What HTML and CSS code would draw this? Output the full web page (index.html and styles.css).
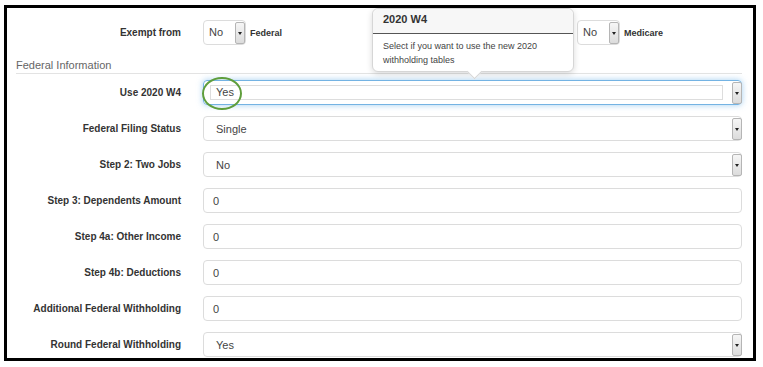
FILE: index.html
```html
<!DOCTYPE html>
<html lang="en">
<head>
  <meta charset="UTF-8" />
  <title>Employee Tax Settings</title>
  <link rel="stylesheet" href="styles.css">
</head>
<body>

<div class="frame">
  <div class="row">
    <div class="label">Exempt from</div>
    <div class="field-inline">
      <div class="mini-select">No<span class="drop"></span></div>
      <span class="inline-label">Federal</span>
    </div>
    <div class="field-inline medicare">
      <div class="mini-select">No<span class="drop"></span></div>
      <span class="inline-label">Medicare</span>
    </div>
  </div>

  <div class="legend">Federal Information</div>

  <div class="row">
    <div class="label">Use 2020 W4</div>
    <div class="control select focus">
      <div class="inner-box">Yes</div>
      <span class="drop"></span>
      <span class="circle"></span>
    </div>
  </div>
  <div class="row">
    <div class="label">Federal Filing Status</div>
    <div class="control select">Single<span class="drop"></span></div>
  </div>
  <div class="row">
    <div class="label">Step 2: Two Jobs</div>
    <div class="control select">No<span class="drop"></span></div>
  </div>
  <div class="row">
    <div class="label">Step 3: Dependents Amount</div>
    <div class="control">0</div>
  </div>
  <div class="row">
    <div class="label">Step 4a: Other Income</div>
    <div class="control">0</div>
  </div>
  <div class="row">
    <div class="label">Step 4b: Deductions</div>
    <div class="control">0</div>
  </div>
  <div class="row">
    <div class="label">Additional Federal Withholding</div>
    <div class="control">0</div>
  </div>
  <div class="row">
    <div class="label">Round Federal Withholding</div>
    <div class="control select">Yes<span class="drop"></span></div>
  </div>

  <div class="tooltip">
    <div class="tooltip-title">2020 W4</div>
    <div class="tooltip-body">Select if you want to use the new 2020 withholding tables</div>
  </div>
</div>

</body>
</html>
```

FILE: styles.css
```css
* { box-sizing: border-box; margin: 0; padding: 0; }
body {
  font-family: 'Liberation Sans', Arial, Helvetica, sans-serif;
  background: #fff;
  color: #333;
}
.frame {
  position: relative;
  margin: 5px 0 0 4px;
  width: 752px;
  height: 356px;
  border: 3px solid #000;
  padding: 12px 11px 0 0;
  overflow: hidden;
  display: flex;
  flex-direction: column;
  gap: 11px;
}
.row {
  display: flex;
  align-items: center;
  height: 25px;
  flex-shrink: 0;
}
.label {
  width: 174px;
  margin-right: 22px;
  text-align: right;
  font-size: 10px;
  font-weight: bold;
  color: #333;
}
.legend {
  height: 29px;
  margin-top: -11px;
  margin-bottom: -5px;
  margin-left: 9px;
  padding-top: 14px;
  font-size: 11px;
  color: #666;
  border-bottom: 1px solid #e3e3e3;
  flex-shrink: 0;
}
.control {
  position: relative;
  flex-grow: 1;
  height: 25px;
  border: 1px solid #dcdcdc;
  border-radius: 4px;
  padding-left: 9px;
  font-size: 11px;
  line-height: 24px;
  color: #444;
}
.control.select {
  padding-left: 12px;
}
.control.focus {
  border-color: #74b3e3;
  box-shadow: 0 0 6px rgba(102, 175, 233, 0.6);
  padding-left: 6px;
  padding-top: 4px;
}
.inner-box {
  width: 513px;
  height: 15px;
  border: 1px solid #ddd;
  line-height: 13px;
  padding-left: 5px;
  color: #444;
}
.drop {
  position: absolute;
  right: -1px;
  top: 1px;
  width: 10px;
  height: 22px;
  border: 1px solid #b5b5b5;
  border-radius: 2px;
  background: linear-gradient(#f6f6f6, #dcdcdc);
}
.drop::after {
  content: '';
  position: absolute;
  left: 2px;
  top: 9px;
  border-left: 2px solid transparent;
  border-right: 2px solid transparent;
  border-top: 3px solid #222;
}
.circle {
  position: absolute;
  left: -2px;
  top: -4px;
  width: 40px;
  height: 33px;
  border: 2px solid #5f9e3c;
  border-radius: 50%;
}
.field-inline {
  display: flex;
  align-items: center;
  gap: 4px;
}
.medicare {
  margin-left: 295px;
}
.mini-select {
  position: relative;
  width: 43px;
  height: 25px;
  border: 1px solid #dcdcdc;
  border-radius: 4px;
  padding-left: 5px;
  font-size: 11px;
  line-height: 23px;
  color: #444;
}
.mini-select .drop {
  top: 1px;
  right: 0;
}
.inline-label {
  font-size: 9px;
  font-weight: bold;
  color: #333;
}
.tooltip {
  position: absolute;
  left: 365px;
  top: 0;
  width: 202px;
  height: 64px;
  background: #fff;
  border: 1px solid #d6d6d6;
  border-radius: 6px;
  box-shadow: 0 2px 6px rgba(0,0,0,0.15);
}
.tooltip::after {
  content: '';
  position: absolute;
  left: 96px;
  bottom: -6px;
  width: 10px;
  height: 10px;
  background: #fff;
  border-right: 1px solid #d6d6d6;
  border-bottom: 1px solid #d6d6d6;
  transform: rotate(45deg);
}
.tooltip-title {
  height: 25px;
  background: #f7f7f7;
  border-bottom: 1px solid #555;
  border-radius: 6px 6px 0 0;
  padding: 4px 10px;
  font-size: 11px;
  font-weight: bold;
  color: #333;
}
.tooltip-body {
  padding: 5px 10px;
  font-size: 9px;
  line-height: 14px;
  color: #444;
}
```
